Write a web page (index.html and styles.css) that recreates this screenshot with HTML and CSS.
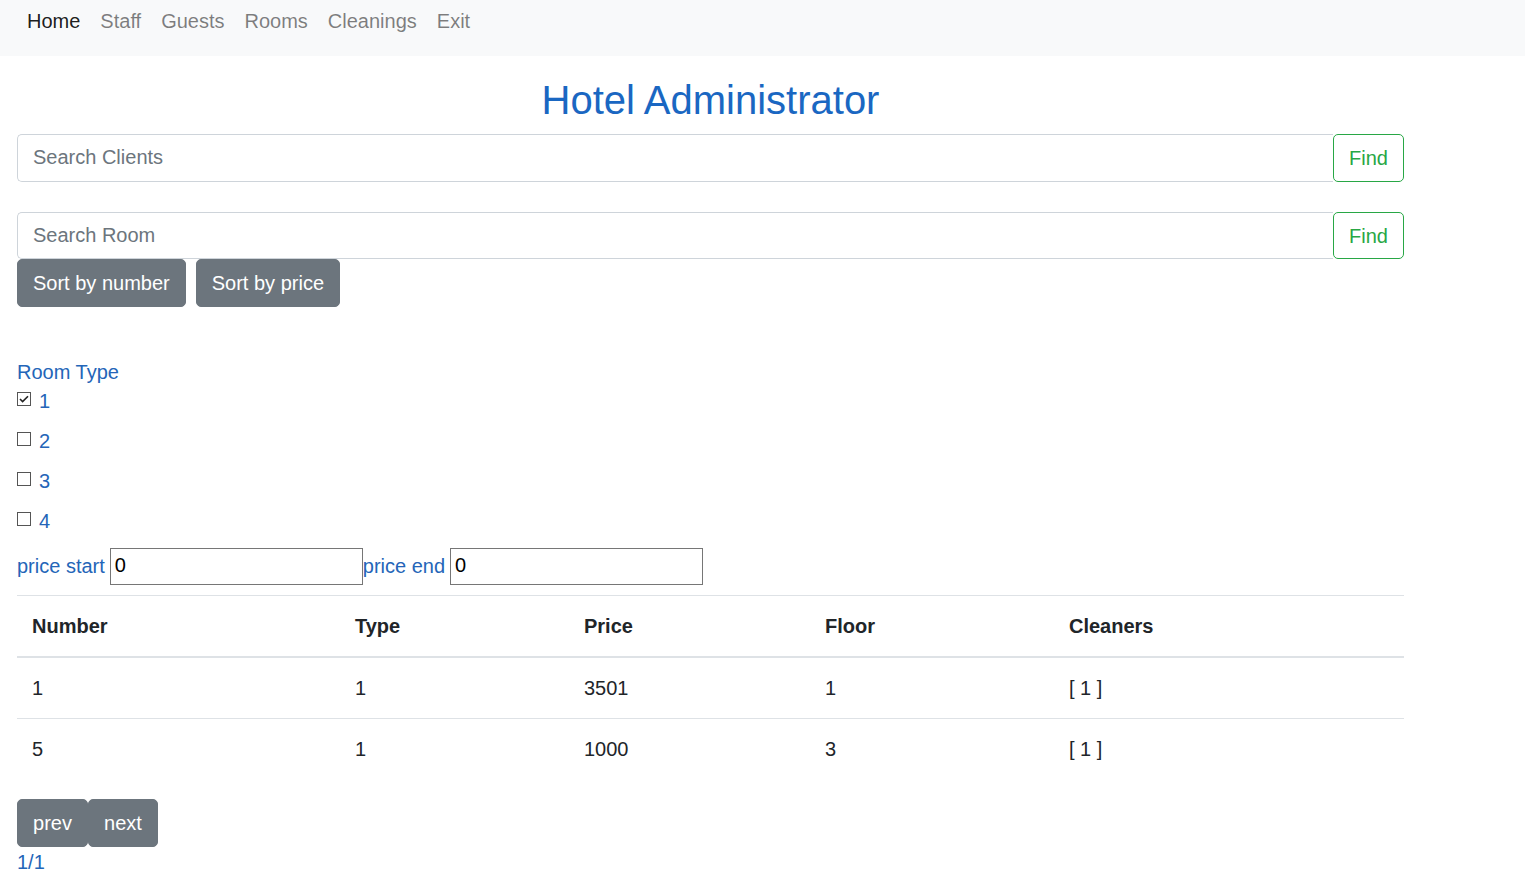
FILE: index.html
```html
<!DOCTYPE html>
<html>
<head>
<meta charset="utf-8">
<link rel="stylesheet" href="styles.css">
</head>
<body>
<nav class="navbar">
  <a class="nav-link active">Home</a>
  <a class="nav-link">Staff</a>
  <a class="nav-link">Guests</a>
  <a class="nav-link">Rooms</a>
  <a class="nav-link">Cleanings</a>
  <a class="nav-link">Exit</a>
</nav>
<main class="content">
  <h1 class="title">Hotel Administrator</h1>
  <div class="input-group">
    <div class="form-control placeholder">Search Clients</div>
    <button class="btn btn-outline-success">Find</button>
  </div>
  <div class="input-group second">
    <div class="form-control placeholder">Search Room</div>
    <button class="btn btn-outline-success">Find</button>
  </div>
  <div class="sort-row">
    <button class="btn btn-secondary">Sort by number</button>
    <button class="btn btn-secondary">Sort by price</button>
  </div>

  <div class="room-type">
    <div class="label type-label">Room Type</div>
    <div class="check-row first"><span class="cb"><svg width="14" height="14" viewBox="0 0 14 14"><rect x="0.5" y="0.5" width="13" height="13" fill="#fff" stroke="#555"/><path d="M3 7 L5.6 9.6 L11 4.2" fill="none" stroke="#222" stroke-width="1.6"/></svg></span><span class="label">1</span></div>
    <div class="check-row"><span class="cb"><svg width="14" height="14" viewBox="0 0 14 14"><rect x="0.5" y="0.5" width="13" height="13" fill="#fff" stroke="#555"/></svg></span><span class="label">2</span></div>
    <div class="check-row"><span class="cb"><svg width="14" height="14" viewBox="0 0 14 14"><rect x="0.5" y="0.5" width="13" height="13" fill="#fff" stroke="#555"/></svg></span><span class="label">3</span></div>
    <div class="check-row"><span class="cb"><svg width="14" height="14" viewBox="0 0 14 14"><rect x="0.5" y="0.5" width="13" height="13" fill="#fff" stroke="#555"/></svg></span><span class="label">4</span></div>
  </div>

  <div class="price-row">
    <span class="label">price start</span><span class="plain-input">0</span><span class="label">price end</span><span class="plain-input">0</span>
  </div>

  <table class="table">
    <thead>
      <tr><th class="c1">Number</th><th class="c2">Type</th><th class="c3">Price</th><th class="c4">Floor</th><th class="c5">Cleaners</th></tr>
    </thead>
    <tbody>
      <tr><td>1</td><td>1</td><td>3501</td><td>1</td><td>[ 1 ]</td></tr>
      <tr><td>5</td><td>1</td><td>1000</td><td>3</td><td>[ 1 ]</td></tr>
    </tbody>
  </table>

  <div class="pager">
    <button class="btn btn-secondary pbtn">prev</button><button class="btn btn-secondary pbtn">next</button>
  </div>
  <div class="label page-count">1/1</div>
</main>
</body>
</html>
```

FILE: styles.css
```css
* { box-sizing: border-box; }
html, body { margin: 0; padding: 0; }
body {
  font-family: "Liberation Sans", Arial, sans-serif;
  font-size: 20px;
  line-height: 1.5;
  color: #212529;
  background: #fff;
}
.navbar {
  display: flex;
  align-items: center;
  height: 56px;
  padding: 0 17px 14px;
  background: #f8f9fa;
}
.nav-link {
  padding: 0 10px;
  color: rgba(0,0,0,0.5);
  line-height: 28px;
}
.nav-link.active { color: rgba(0,0,0,0.9); }

.content {
  width: 1404px;
  padding-left: 17px;
}
.title {
  margin: 20px 0 10px;
  text-align: center;
  font-size: 40px;
  font-weight: 400;
  line-height: 48px;
  color: #1a67c2;
}
.input-group {
  display: flex;
  height: 48px;
}
.input-group.second { margin-top: 30px; height: 47px; }
.input-group.second .form-control,
.input-group.second .btn { height: 47px; }
.form-control {
  flex: 1;
  height: 48px;
  padding: 8px 15px;
  border: 1px solid #ced4da;
  border-right: none;
  border-radius: 5px 0 0 5px;
  line-height: 28px;
}
.placeholder { color: #6c757d; }
.btn {
  font-family: inherit;
  font-size: 20px;
  line-height: 28px;
  padding: 8px 15px;
  border-radius: 5px;
  border: 1px solid transparent;
  cursor: pointer;
}
.btn-outline-success {
  width: 71px;
  color: #28a745;
  background: #fff;
  border-color: #28a745;
  padding: 8px 0;
  text-align: center;
}
.btn-secondary {
  color: #fff;
  background: #6c757d;
  border-color: #6c757d;
}
.sort-row {
  display: flex;
  gap: 10px;
}
.sort-row .btn { height: 48px; padding: 8px 15px; }
.label { color: #2465b8; }

.room-type { margin-top: 50px; }
.type-label { line-height: 30px; }
.check-row {
  display: flex;
  align-items: center;
  height: 30px;
  margin-bottom: 10px;
}
.check-row.first {
  height: 28px;
  margin-bottom: 11px;
}
.cb {
  display: inline-flex;
  width: 22px;
  height: 14px;
  margin-top: -5px;
}
.cb svg { display: block; }

.price-row {
  display: flex;
  align-items: center;
  height: 36px;
  margin-top: 12px;
}
.plain-input {
  display: inline-block;
  width: 253px;
  height: 37px;
  border: 1px solid #767676;
  padding: 0 4px;
  line-height: 33px;
  color: #000;
  margin-left: 5px;
}

.table {
  width: 1387px;
  border-collapse: collapse;
  margin-top: 11px;
}
.table th, .table td {
  padding: 15px;
  text-align: left;
  vertical-align: top;
  line-height: 30px;
  border-top: 1px solid #dee2e6;
}
.table th { font-weight: 700; }
.table thead th { border-bottom: 2px solid #dee2e6; }
.c1 { width: 323px; }
.c2 { width: 229px; }
.c3 { width: 241px; }
.c4 { width: 244px; }
.c5 { width: 350px; }

.pager {
  display: flex;
  margin-top: 20px;
}
.pbtn { height: 48px; width: 71px; text-align: center; padding-left: 0; padding-right: 0; }
.pbtn + .pbtn { width: 70px; }
.page-count { line-height: 30px; }
```
